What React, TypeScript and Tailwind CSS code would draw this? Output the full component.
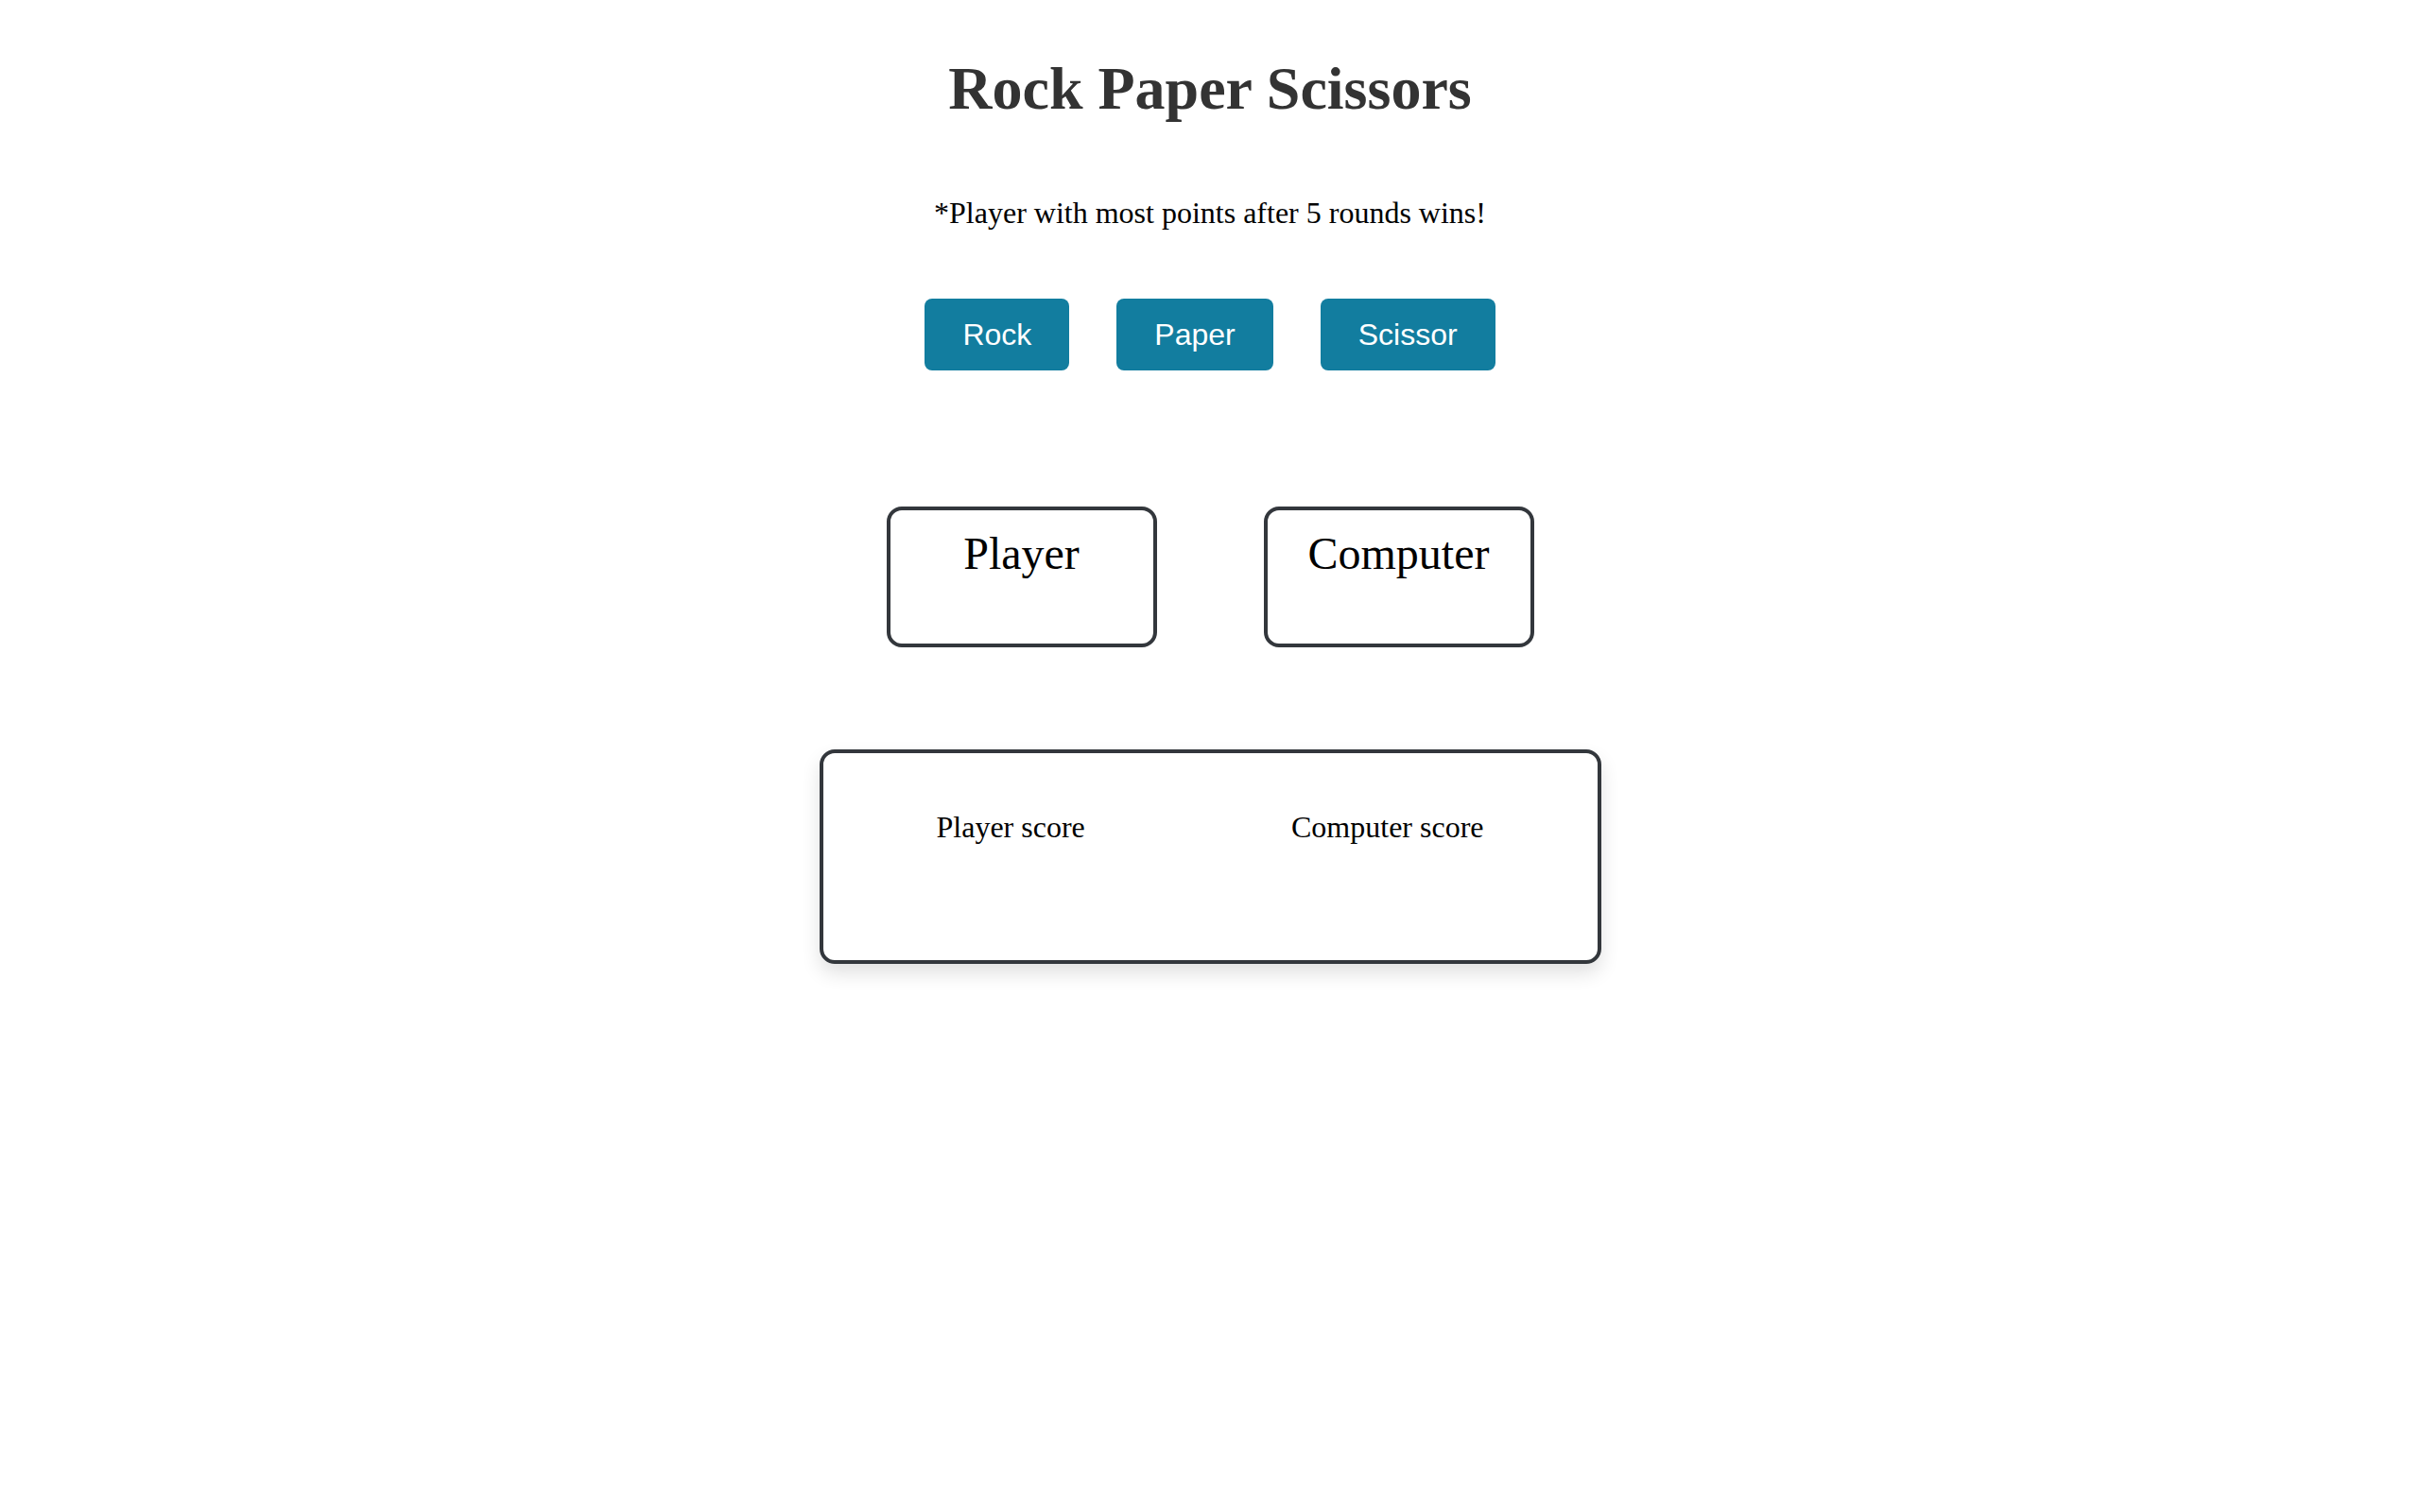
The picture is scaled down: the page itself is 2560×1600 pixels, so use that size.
import React from "react";

const serif = "font-['Liberation_Serif','Times_New_Roman',serif]";

export default function App() {
  return (
    <div className={`min-h-screen w-full bg-white ${serif} flex flex-col items-center`}>
      <h1 className="mt-[57px] text-[64px] leading-[74px] font-bold text-[#333333]">
        Rock Paper Scissors
      </h1>
      <p className="mt-[76px] text-[32px] leading-[37px] text-black">
        *Player with most points after 5 rounds wins!
      </p>
      <div className="mt-[72px] flex gap-[50px] font-['Liberation_Sans',Arial,sans-serif]">
        {["Rock", "Paper", "Scissor"].map((t) => (
          <button
            key={t}
            className="h-[76px] px-[40px] rounded-[8px] bg-[#127d9f] text-white text-[32px] leading-[37px] flex items-center justify-center"
          >
            {t}
          </button>
        ))}
      </div>
      <div className="mt-[144px] flex gap-[113px]">
        {["Player", "Computer"].map((t) => (
          <div
            key={t}
            className="w-[286px] h-[149px] border-4 border-[#33373c] rounded-[16px] pt-[18px] text-center text-[48px] leading-[55px] text-black"
          >
            {t}
          </div>
        ))}
      </div>
      <div className="mt-[108px] w-[827px] h-[227px] border-4 border-[#33373c] rounded-[16px] shadow-[0_10px_20px_rgba(0,0,0,0.12)] pt-[60px] px-[120px] flex justify-between items-start text-[32px] leading-[37px] text-black">
        <span>Player score</span>
        <span>Computer score</span>
      </div>
    </div>
  );
}
